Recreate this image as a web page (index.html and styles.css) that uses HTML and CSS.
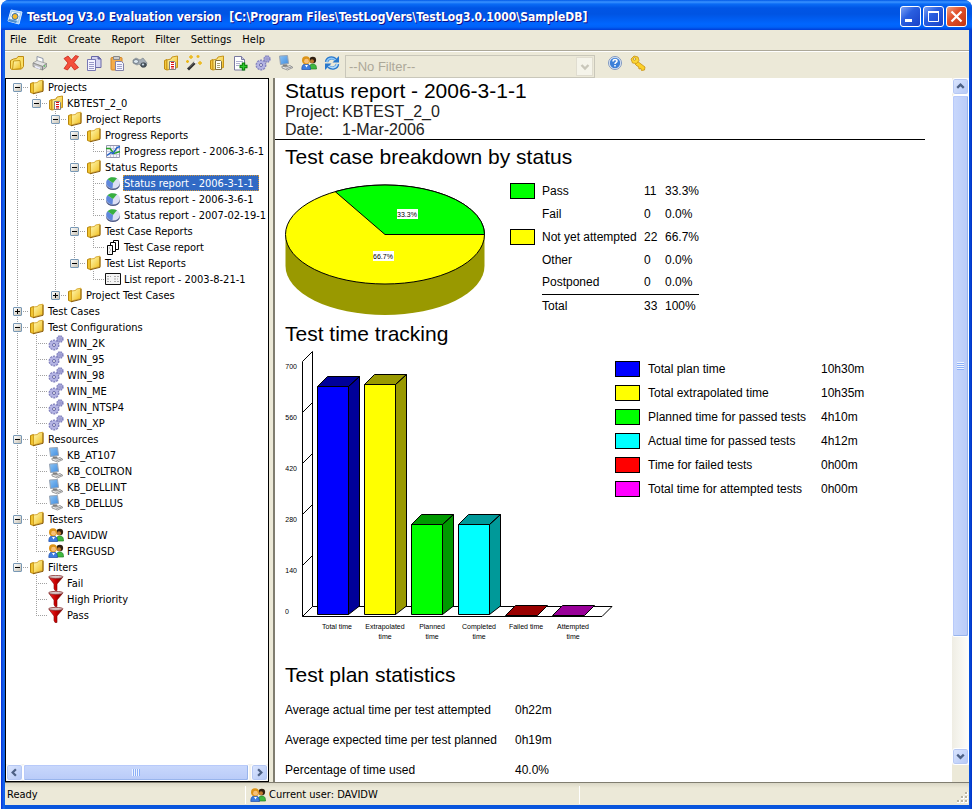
FILE: index.html
```html
<!DOCTYPE html>
<html lang="en">
  <head>
    <meta charset="UTF-8" />
    <meta name="viewport" content="width=device-width, initial-scale=1.0" />
    <title>TestLog V3.0 Evaluation version</title>
    <link rel="stylesheet" href="styles.css">
  </head>

  <body>
    <!-- Icon set, every icon is drawn on a 16x16 grid -->
    <svg class="sprite" aria-hidden="true">
      <defs>
        <linearGradient id="gold" x1="0" y1="0" x2="1" y2="1">
          <stop offset="0" stop-color="#fffbb8" />
          <stop offset="1" stop-color="#f0bb18" />
        </linearGradient>
        <linearGradient id="red" x1="0" x2="1">
          <stop offset="0" stop-color="#f03030" />
          <stop offset="0.5" stop-color="#c80000" />
          <stop offset="1" stop-color="#700000" />
        </linearGradient>
        <linearGradient id="screen" x1="0" y1="0" x2="1" y2="1">
          <stop offset="0" stop-color="#8cc4f4" />
          <stop offset="1" stop-color="#3f8ce0" />
        </linearGradient>
      </defs>
      <symbol id="i-app" viewBox="0 0 16 16">
        <path d="M4 1l11 2-3 12-11-3z" fill="#9fcdf4" stroke="#d8ecff" />
        <path d="M5 3l8 1.500-2 7-8-2z" fill="#fff" />
        <circle cx="8" cy="7.500" r="3" fill="#f4b92c" stroke="#2c6cb4" />
        <path d="M2 10l8 2-1 2-8-2z" fill="#4f8fd0" />
      </symbol>
      <symbol id="i-folder" viewBox="0 0 16 16">
        <path d="M1.500 4.500l3-1v11l-3-1z" fill="#f0c430" stroke="#b8860b" />
        <path d="M4.500 4l4-.500 1-1.500 4.500-.800v10.300l-9.500 2.500z" fill="url(#gold)" stroke="#d09c18" stroke-width=".8" />
        <path d="M4 14.800l10-2.500V2" fill="none" stroke="#8a5c08" />
      </symbol>
      <symbol id="i-open" viewBox="0 0 16 16">
        <path d="M1.500 5.500l3-1.500 3-.500 1.500-2h5.500v10l-2 2.500-9.500.500-1.500-1z" fill="#fbe066" stroke="#c08a10" />
        <path d="M4.500 6l6.500-.500 1 8-8.500 1z" fill="url(#gold)" stroke="#c89a18" />
      </symbol>
      <symbol id="i-printer" viewBox="0 0 16 16">
        <path d="M5 7V1.500l6 2V8" fill="#fff" stroke="#8e96a8" />
        <path d="M1 8l4-2.500 9.500 3-3.500 3z" fill="#e4e4e4" stroke="#909090" stroke-width=".7" />
        <path d="M1 8v3.500l9.500 3.500v-3.500zM10.500 11.500V15l4-3V8.500z" fill="#c4c4c4" stroke="#808080" stroke-width=".7" />
        <path d="M3 11.500l5 2" stroke="#eef" stroke-width="1.500" />
        <circle cx="12.500" cy="11" r=".8" fill="#4c4" />
      </symbol>
      <symbol id="i-delete" viewBox="0 0 16 16">
        <path d="M1 3.500l4-2.500 3.500 4 4-4.500 3 1-4.500 6 4.500 5-4 2.500-3.500-4.500-3.500 4.500-3.500-1.500 4-5.500z" fill="#f4503c" stroke="#c82418" stroke-width=".8" />
      </symbol>
      <symbol id="i-copy" viewBox="0 0 16 16">
        <path d="M5.500 1.500h7l2.500 2.500v8.500H5.500z" fill="#d4d4f0" stroke="#6868a8" />
        <path d="M12 1.500V4h3" fill="#6868a8" stroke="#6868a8" />
        <path d="M1.500 4.500h8v11h-8z" fill="#f4f4ff" stroke="#7878b4" />
        <path d="M3 7.500h5M3 9.500h5M3 11.500h5M3 13.500h5" stroke="#9a9ac8" />
      </symbol>
      <symbol id="i-paste" viewBox="0 0 16 16">
        <rect x="2" y="2.500" width="11" height="12.500" rx="1" fill="#f4ac48" stroke="#d08428" />
        <path d="M4.500 1.500h6v3h-6z" fill="#ccc" stroke="#888" />
        <path d="M6.500 6.500h6l2 2v7h-8z" fill="#f4f6ff" stroke="#8080a8" />
        <path d="M8 9.500h5M8 11.500h5M8 13.500h5" stroke="#a0a0c8" />
      </symbol>
      <symbol id="i-find" viewBox="0 0 16 16">
        <path d="M1 5l3-2 4 2 3-2 4 5-1 3-4 1-3-3-2 1-4-2z" fill="#a4adb6" stroke="#7c868e" stroke-width=".7" />
        <ellipse cx="4" cy="6.500" rx="2.500" ry="2" fill="#dce8f0" stroke="#66707a" stroke-width=".8" />
        <ellipse cx="11.500" cy="10" rx="2.800" ry="2.300" fill="#4a545c" stroke="#363e46" stroke-width=".6" />
        <ellipse cx="11" cy="9.500" rx="1.200" ry="1" fill="#c8d8e4" />
      </symbol>
      <symbol id="i-project" viewBox="0 0 16 16">
        <path d="M1.500 5.500l2.500-1v10.500l-2.500-1z" fill="#f4c83c" stroke="#c08c10" />
        <path d="M4 5l4-1 1-2 5.500-1v11.500l-10.500 2.500z" fill="url(#gold)" stroke="#c89418" />
        <path d="M6.500 6.500h5l1 1v7h-6z" fill="#fff" stroke="#808080" />
        <path d="M8 7.500h3M8 9.500h3M8 11.500h3M8 13h3" stroke="#e01010" />
      </symbol>
      <symbol id="i-wand" viewBox="0 0 16 16">
        <path d="M2 14.500l7.500-7.500" stroke="#303030" stroke-width="2.800" />
        <path d="M3 12.500l5.500-5.500" stroke="#909090" stroke-width=".8" />
        <path d="M8.500 8l2-2" stroke="#f4f4f4" stroke-width="2.800" />
        <path d="M5 0v4M3 2h4M12 0v3M10.500 1.500h3M14 6v4M12 8h4M1.500 5v3M0 6.500h3" stroke="#ecb818" stroke-width="1.400" />
      </symbol>
      <symbol id="i-case" viewBox="0 0 16 16">
        <path d="M1.500 5.500l2.500-1v10.500l-2.500-1z" fill="#f4c83c" stroke="#c08c10" />
        <path d="M4 5l4-1 1-2 5.500-1v11.500l-10.500 2.500z" fill="url(#gold)" stroke="#c89418" />
        <path d="M6.500 5.500h5l1 1v8h-6z" fill="#fffff4" stroke="#807040" />
        <path d="M8 8.500h3M8 10.500h3M8 12.500h3" stroke="#a8a070" />
      </symbol>
      <symbol id="i-add" viewBox="0 0 16 16">
        <path d="M2.500 1.500h7l3 3v10.500h-10z" fill="#fff" stroke="#7878a0" />
        <path d="M9.500 1.500v3h3" fill="#c8c8e0" stroke="#7878a0" />
        <path d="M4 6.500h7M4 8.500h4M4 10.500h3" stroke="#b0b0d0" />
        <path d="M11.500 7.500v8M7.500 11.500h8" stroke="#087808" stroke-width="3.400" />
        <path d="M11.500 8.500v6M8.500 11.500h6" stroke="#30c830" stroke-width="1.400" />
      </symbol>
      <symbol id="i-gears" viewBox="0 0 16 16">
        <circle cx="6" cy="10" r="4.500" fill="#b0b0e0" stroke="#8484c0" stroke-width="2" stroke-dasharray="2 .8" />
        <circle cx="6" cy="10" r="4" fill="#b4b4e4" />
        <circle cx="6" cy="10" r="1.500" fill="#f4f4f4" stroke="#6868a8" />
        <circle cx="12" cy="4" r="2.800" fill="#b8b8e8" stroke="#8484c0" stroke-width="1.800" stroke-dasharray="1.600 .6" />
        <circle cx="12" cy="4" r="1" fill="#f4f4ff" stroke="#6868a8" stroke-width=".7" />
      </symbol>
      <symbol id="i-computer" viewBox="0 0 16 16">
        <path d="M1.500 1l8-.500 1 8-8 1z" fill="url(#screen)" stroke="#98a4b4" />
        <path d="M5 9.500h4l1 2-5 .500z" fill="#808080" />
        <path d="M4 11l4 1 4-1.500 3 2-5.500 2.500-5.500-2z" fill="#e8e8e8" stroke="#888" stroke-width=".8" />
        <path d="M8.500 13.500l5-1.500" stroke="#707070" stroke-width=".7" />
      </symbol>
      <symbol id="i-users" viewBox="0 0 16 16">
        <path d="M8.500 14c0-5 1.500-5 3.500-5s3.500 1 3.500 5z" fill="#40b840" stroke="#208020" stroke-width=".7" />
        <circle cx="11.800" cy="5" r="3.300" fill="#302010" />
        <circle cx="11" cy="6.300" r="2" fill="#c07830" />
        <path d="M.8 14.500c0-4.500 1.700-5.500 4.200-5.500s4.500 1 4.500 5.500z" fill="#3c7ce0" stroke="#1c4cac" stroke-width=".7" />
        <circle cx="5" cy="5.300" r="4" fill="#dc9418" />
        <circle cx="5.500" cy="6.200" r="2.400" fill="#f8c078" />
        <path d="M4 10l1.500 2.500 1.500-2.500z" fill="#fff" />
      </symbol>
      <symbol id="i-refresh" viewBox="0 0 16 16">
        <path d="M2.500 7C3 3 8 1.500 11.500 4.500" fill="none" stroke="#2878cc" stroke-width="3.400" />
        <path d="M15 1v6.500H8.500z" fill="#2878cc" />
        <path d="M2.800 7C3.500 3.500 8 2 11.500 5" fill="none" stroke="#8cc8f8" stroke-width="1.600" />
        <path d="M13.500 9C13 13 8 14.500 4.500 11.500" fill="none" stroke="#2878cc" stroke-width="3.400" />
        <path d="M1 15V8.500h6.500z" fill="#2878cc" />
        <path d="M13.200 9C12.500 12.500 8 14 4.500 11" fill="none" stroke="#b4dcfc" stroke-width="1.600" />
      </symbol>
      <symbol id="i-help" viewBox="0 0 16 16">
        <circle cx="8" cy="8" r="6.500" fill="#e4ecf8" stroke="#8098c0" />
        <circle cx="8" cy="8" r="5.200" fill="#3c80d8" />
        <path d="M6 6.500c0-3 4.200-2.500 4-.3-.2 1.300-2 1.300-2 2.800M8 10v1.600" fill="none" stroke="#fff" stroke-width="1.500" />
      </symbol>
      <symbol id="i-key" viewBox="0 0 16 16">
        <path d="M7 6l8 6-.500 3-3 .500-.500-2-2 .500-.500-2.500-1.500-.500-2-2" fill="#fcd028" stroke="#c89010" stroke-width=".8" />
        <path d="M1 4l3-3 4 1 1 3.500-2.500 3-4-.500z" fill="#fcd838" stroke="#c89010" stroke-width=".8" />
        <circle cx="4.500" cy="4" r="1.300" fill="#ece9d8" stroke="#b88408" stroke-width=".7" />
      </symbol>
      <symbol id="i-chart" viewBox="0 0 16 16">
        <path d="M1.500 2.500h13v12h-13z" fill="#f4f4fc" stroke="#9898b0" />
        <path d="M2 5.500h12M2 8.500h12M2 11.500h12M5.500 3v11M8.500 3v11M11.500 3v11" stroke="#c8c8dc" />
        <path d="M1 5.500h4l4 5 6-2" fill="none" stroke="#28a028" stroke-width="1.400" />
        <path d="M2 12.500l4-3 2 1 4-6 3-1" fill="none" stroke="#2060c8" stroke-width="1.400" />
      </symbol>
      <symbol id="i-pie" viewBox="0 0 16 16">
        <ellipse cx="8" cy="9.500" rx="7" ry="5.500" fill="#505c88" />
        <ellipse cx="8" cy="7.800" rx="7" ry="5.800" fill="#dce0f4" />
        <path d="M8 8L2.500 4.300C0 7 1 12.500 7.500 13.600z" fill="#6088dc" />
        <path d="M8 8L2.500 4.300C5 1.500 9 1.800 12 3.300z" fill="#38b040" />
      </symbol>
      <symbol id="i-pages" viewBox="0 0 16 16">
        <path d="M8.500 1.500h5v9h-5z" fill="#fff" stroke="#000" />
        <path d="M5.500 3.500h5v9h-5z" fill="#fff" stroke="#000" />
        <path d="M2.500 6.500h5v9h-5z" fill="#f4f4f4" stroke="#000" />
        <path d="M4 9h1M5 11h1M4 13h1" stroke="#999" />
      </symbol>
      <symbol id="i-list" viewBox="0 0 16 16">
        <path d="M.5 2.500h15v11H.5z" fill="#f4f4f4" stroke="#111" />
        <path d="M2 5.500h4M9 5.500h5M2 8h3M9 8h4M2 10.500h4M9 10.500h5" stroke="#aaa" stroke-dasharray="2 1" />
      </symbol>
      <symbol id="i-funnel" viewBox="0 0 16 16">
        <path d="M1 2.500L6 9v4.500l1 2h2V9l5.500-6.500z" fill="url(#red)" stroke="#800000" stroke-width=".6" />
        <ellipse cx="7.800" cy="1.900" rx="7.300" ry="1.500" fill="#d8c8c8" stroke="#883030" stroke-width=".8" />
      </symbol>
      <symbol id="i-up" viewBox="0 0 16 16"><path d="M4.500 9.500L8 6l3.500 3.500" fill="none" stroke="#4d6185" stroke-width="2.400" /></symbol>
      <symbol id="i-down" viewBox="0 0 16 16"><path d="M4.500 6L8 9.500 11.500 6" fill="none" stroke="currentColor" stroke-width="2.400" /></symbol>
      <symbol id="i-left" viewBox="0 0 16 16"><path d="M9.500 4.500L6 8l3.500 3.500" fill="none" stroke="#4d6185" stroke-width="2.400" /></symbol>
      <symbol id="i-right" viewBox="0 0 16 16"><path d="M6.500 4.500L10 8l-3.500 3.500" fill="none" stroke="#4d6185" stroke-width="2.400" /></symbol>
    </svg>

    <div class="window">
      <!-- Title bar -->
      <header class="titlebar">
        <svg class="icon"><use href="#i-app" /></svg>
        <h1 class="caption">TestLog V3.0 Evaluation version&nbsp; [C:\Program Files\TestLogVers\TestLog3.0.1000\SampleDB]</h1>
        <button class="winbtn" aria-label="Minimize"><svg viewBox="0 0 19 19"><path d="M4 13.500h7" stroke="#fff" stroke-width="3" /></svg></button>
        <button class="winbtn" aria-label="Maximize"><svg viewBox="0 0 19 19"><path d="M4.500 5.500h10v9h-10z" fill="none" stroke="#fff" /><path d="M4 5h11" stroke="#fff" stroke-width="2" /></svg></button>
        <button class="winbtn close" aria-label="Close"><svg viewBox="0 0 19 19"><path d="M4.500 4.500l10 10M14.500 4.500l-10 10" stroke="#fff" stroke-width="2.200" /></svg></button>
      </header>

      <!-- Menu -->
      <nav class="menu">
        <button>File</button>
        <button>Edit</button>
        <button>Create</button>
        <button>Report</button>
        <button>Filter</button>
        <button>Settings</button>
        <button>Help</button>
      </nav>

      <!-- Toolbar -->
      <div class="toolbar">
        <button aria-label="Open"><svg class="icon"><use href="#i-open" /></svg></button>
        <button aria-label="Print"><svg class="icon"><use href="#i-printer" /></svg></button>
        <button class="group" aria-label="Delete"><svg class="icon"><use href="#i-delete" /></svg></button>
        <button aria-label="Copy"><svg class="icon"><use href="#i-copy" /></svg></button>
        <button aria-label="Paste"><svg class="icon"><use href="#i-paste" /></svg></button>
        <button aria-label="Find"><svg class="icon"><use href="#i-find" /></svg></button>
        <button class="group" aria-label="New project"><svg class="icon"><use href="#i-project" /></svg></button>
        <button aria-label="Wizard"><svg class="icon"><use href="#i-wand" /></svg></button>
        <button aria-label="New test case"><svg class="icon"><use href="#i-case" /></svg></button>
        <button aria-label="Add document"><svg class="icon"><use href="#i-add" /></svg></button>
        <button aria-label="Configurations"><svg class="icon"><use href="#i-gears" /></svg></button>
        <button aria-label="Resources"><svg class="icon"><use href="#i-computer" /></svg></button>
        <button aria-label="Testers"><svg class="icon"><use href="#i-users" /></svg></button>
        <button aria-label="Refresh"><svg class="icon"><use href="#i-refresh" /></svg></button>
        <div class="filter">
          <select aria-label="Filter" disabled>
            <option>--No Filter--</option>
          </select>
          <span class="drop"><svg class="icon"><use href="#i-down" /></svg></span>
        </div>
        <button aria-label="Help"><svg class="icon"><use href="#i-help" /></svg></button>
        <button aria-label="License key"><svg class="icon"><use href="#i-key" /></svg></button>
      </div>

      <div class="content">
        <!-- Project tree -->
        <aside class="sidebar">
          <ul class="tree">
            <li>
              <div class="row"><span class="lead"><button class="toggle" aria-label="Collapse"></button></span><svg class="icon"><use href="#i-folder" /></svg><span class="label">Projects</span></div>
              <ul>
                <li>
                  <div class="row"><span class="lead"><button class="toggle" aria-label="Collapse"></button></span><svg class="icon"><use href="#i-project" /></svg><span class="label">KBTEST_2_0</span></div>
                  <ul>
                    <li>
                      <div class="row"><span class="lead"><button class="toggle" aria-label="Collapse"></button></span><svg class="icon"><use href="#i-folder" /></svg><span class="label">Project Reports</span></div>
                      <ul>
                        <li>
                          <div class="row"><span class="lead"><button class="toggle" aria-label="Collapse"></button></span><svg class="icon"><use href="#i-folder" /></svg><span class="label">Progress Reports</span></div>
                          <ul>
                            <li><div class="row"><span class="lead"></span><svg class="icon"><use href="#i-chart" /></svg><span class="label">Progress report - 2006-3-6-1</span></div></li>
                          </ul>
                        </li>
                        <li>
                          <div class="row"><span class="lead"><button class="toggle" aria-label="Collapse"></button></span><svg class="icon"><use href="#i-folder" /></svg><span class="label">Status Reports</span></div>
                          <ul>
                            <li><div class="row"><span class="lead"></span><svg class="icon"><use href="#i-pie" /></svg><span class="label selected">Status report - 2006-3-1-1</span></div></li>
                            <li><div class="row"><span class="lead"></span><svg class="icon"><use href="#i-pie" /></svg><span class="label">Status report - 2006-3-6-1</span></div></li>
                            <li><div class="row"><span class="lead"></span><svg class="icon"><use href="#i-pie" /></svg><span class="label">Status report - 2007-02-19-1</span></div></li>
                          </ul>
                        </li>
                        <li>
                          <div class="row"><span class="lead"><button class="toggle" aria-label="Collapse"></button></span><svg class="icon"><use href="#i-folder" /></svg><span class="label">Test Case Reports</span></div>
                          <ul>
                            <li><div class="row"><span class="lead"></span><svg class="icon"><use href="#i-pages" /></svg><span class="label">Test Case report</span></div></li>
                          </ul>
                        </li>
                        <li>
                          <div class="row"><span class="lead"><button class="toggle" aria-label="Collapse"></button></span><svg class="icon"><use href="#i-folder" /></svg><span class="label">Test List Reports</span></div>
                          <ul>
                            <li><div class="row"><span class="lead"></span><svg class="icon"><use href="#i-list" /></svg><span class="label">List report - 2003-8-21-1</span></div></li>
                          </ul>
                        </li>
                      </ul>
                    </li>
                    <li>
                      <div class="row"><span class="lead"><button class="toggle plus" aria-label="Expand"></button></span><svg class="icon"><use href="#i-folder" /></svg><span class="label">Project Test Cases</span></div>
                    </li>
                  </ul>
                </li>
              </ul>
            </li>
            <li>
              <div class="row"><span class="lead"><button class="toggle plus" aria-label="Expand"></button></span><svg class="icon"><use href="#i-folder" /></svg><span class="label">Test Cases</span></div>
            </li>
            <li>
              <div class="row"><span class="lead"><button class="toggle" aria-label="Collapse"></button></span><svg class="icon"><use href="#i-folder" /></svg><span class="label">Test Configurations</span></div>
              <ul>
                <li><div class="row"><span class="lead"></span><svg class="icon"><use href="#i-gears" /></svg><span class="label">WIN_2K</span></div></li>
                <li><div class="row"><span class="lead"></span><svg class="icon"><use href="#i-gears" /></svg><span class="label">WIN_95</span></div></li>
                <li><div class="row"><span class="lead"></span><svg class="icon"><use href="#i-gears" /></svg><span class="label">WIN_98</span></div></li>
                <li><div class="row"><span class="lead"></span><svg class="icon"><use href="#i-gears" /></svg><span class="label">WIN_ME</span></div></li>
                <li><div class="row"><span class="lead"></span><svg class="icon"><use href="#i-gears" /></svg><span class="label">WIN_NTSP4</span></div></li>
                <li><div class="row"><span class="lead"></span><svg class="icon"><use href="#i-gears" /></svg><span class="label">WIN_XP</span></div></li>
              </ul>
            </li>
            <li>
              <div class="row"><span class="lead"><button class="toggle" aria-label="Collapse"></button></span><svg class="icon"><use href="#i-folder" /></svg><span class="label">Resources</span></div>
              <ul>
                <li><div class="row"><span class="lead"></span><svg class="icon"><use href="#i-computer" /></svg><span class="label">KB_AT107</span></div></li>
                <li><div class="row"><span class="lead"></span><svg class="icon"><use href="#i-computer" /></svg><span class="label">KB_COLTRON</span></div></li>
                <li><div class="row"><span class="lead"></span><svg class="icon"><use href="#i-computer" /></svg><span class="label">KB_DELLINT</span></div></li>
                <li><div class="row"><span class="lead"></span><svg class="icon"><use href="#i-computer" /></svg><span class="label">KB_DELLUS</span></div></li>
              </ul>
            </li>
            <li>
              <div class="row"><span class="lead"><button class="toggle" aria-label="Collapse"></button></span><svg class="icon"><use href="#i-folder" /></svg><span class="label">Testers</span></div>
              <ul>
                <li><div class="row"><span class="lead"></span><svg class="icon"><use href="#i-users" /></svg><span class="label">DAVIDW</span></div></li>
                <li><div class="row"><span class="lead"></span><svg class="icon"><use href="#i-users" /></svg><span class="label">FERGUSD</span></div></li>
              </ul>
            </li>
            <li>
              <div class="row"><span class="lead"><button class="toggle" aria-label="Collapse"></button></span><svg class="icon"><use href="#i-folder" /></svg><span class="label">Filters</span></div>
              <ul>
                <li><div class="row"><span class="lead"></span><svg class="icon"><use href="#i-funnel" /></svg><span class="label">Fail</span></div></li>
                <li><div class="row"><span class="lead"></span><svg class="icon"><use href="#i-funnel" /></svg><span class="label">High Priority</span></div></li>
                <li><div class="row"><span class="lead"></span><svg class="icon"><use href="#i-funnel" /></svg><span class="label">Pass</span></div></li>
              </ul>
            </li>
          </ul>
          <div class="scroll-h">
            <button class="scrollbtn" aria-label="Scroll left"><svg class="icon"><use href="#i-left" /></svg></button>
            <div class="thumb"><span class="grip"></span></div>
            <button class="scrollbtn" aria-label="Scroll right"><svg class="icon"><use href="#i-right" /></svg></button>
          </div>
        </aside>

        <!-- Report -->
        <main class="report">
          <div class="report-head">
            <h2>Status report - 2006-3-1-1</h2>
            <dl>
              <dt>Project:</dt>
              <dd>KBTEST_2_0</dd>
              <dt>Date:</dt>
              <dd>1-Mar-2006</dd>
            </dl>
          </div>

          <section class="breakdown">
            <h2>Test case breakdown by status</h2>
            <div class="chart-row">
              <svg class="pie" viewBox="285 183 201 131" role="img" aria-label="Test cases by status">
                <path d="M285.500 234v31a99.500 49 0 0 0 199 0v-31z" fill="#999900" />
                <ellipse cx="385" cy="233.500" rx="99.500" ry="49.500" fill="#ffff00" stroke="#000" />
                <path d="M385 233.500h99.500A99.500 49.500 0 0 0 335.250 190.630z" fill="#00ff00" stroke="#000" />
                <path d="M397 208h21v10h-21zM373 250h21v10h-21z" fill="#fff" />
                <text x="407" y="216" class="tiny">33.3%</text>
                <text x="383" y="258" class="tiny">66.7%</text>
              </svg>
              <table class="status">
                <tr>
                  <td><span class="swatch pass"></span></td>
                  <td>Pass</td>
                  <td>11</td>
                  <td>33.3%</td>
                </tr>
                <tr>
                  <td></td>
                  <td>Fail</td>
                  <td>0</td>
                  <td>0.0%</td>
                </tr>
                <tr>
                  <td><span class="swatch untested"></span></td>
                  <td>Not yet attempted</td>
                  <td>22</td>
                  <td>66.7%</td>
                </tr>
                <tr>
                  <td></td>
                  <td>Other</td>
                  <td>0</td>
                  <td>0.0%</td>
                </tr>
                <tr>
                  <td></td>
                  <td>Postponed</td>
                  <td>0</td>
                  <td>0.0%</td>
                </tr>
                <tr class="total">
                  <td></td>
                  <td>Total</td>
                  <td>33</td>
                  <td>100%</td>
                </tr>
              </table>
            </div>
          </section>

          <section class="tracking">
            <h2>Test time tracking</h2>
            <div class="chart-row">
              <svg class="bars" viewBox="285 352 330 292" role="img" aria-label="Test time in minutes">
                <!-- Axes -->
                <g fill="none" stroke="#000">
                  <path d="M302.500 618.500V363.500l10-10V608.500H612M302.500 618.500H602l10-10M302.500 618.500l10-10" />
                  <path d="M302.500 414.500l10-10M302.500 465.500l10-10M302.500 516.500l10-10M302.500 567.500l10-10" />
                </g>
                <!-- Bars: front, top and side faces -->
                <g stroke="#000">
                  <path d="M317.500 388.500h31v228h-31z" fill="#0000ff" />
                  <path d="M317.500 388.500l10-10h32l-11 10zM348.500 388.500l11-10v229.500l-11 8.500z" fill="#000099" />
                  <path d="M364.500 386.500h31v230h-31z" fill="#ffff00" />
                  <path d="M364.500 386.500l10-10h32l-11 10zM395.500 386.500l11-10v231.500l-11 8.500z" fill="#999900" />
                  <path d="M411.500 526.500h31v90h-31z" fill="#00ff00" />
                  <path d="M411.500 526.500l10-10h32l-11 10zM442.500 526.500l11-10v91.500l-11 8.500z" fill="#009900" />
                  <path d="M458.500 526.500h31v90h-31z" fill="#00ffff" />
                  <path d="M458.500 526.500l10-10h32l-11 10zM489.500 526.500l11-10v91.500l-11 8.500z" fill="#009999" />
                  <path d="M505.500 617.500l10-10h32l-10 10z" fill="#990000" />
                  <path d="M552.500 617.500l10-10h32l-10 10z" fill="#990099" />
                </g>
                <g class="tiny axis">
                  <text x="297" y="371">700</text>
                  <text x="297" y="422">560</text>
                  <text x="297" y="473">420</text>
                  <text x="297" y="524">280</text>
                  <text x="297" y="575">140</text>
                  <text x="289" y="616">0</text>
                </g>
                <g class="tiny">
                  <text x="337" y="631">Total time</text>
                  <text x="385" y="631">Extrapolated</text>
                  <text x="385" y="641">time</text>
                  <text x="432" y="631">Planned</text>
                  <text x="432" y="641">time</text>
                  <text x="479" y="631">Completed</text>
                  <text x="479" y="641">time</text>
                  <text x="526" y="631">Failed time</text>
                  <text x="573" y="631">Attempted</text>
                  <text x="573" y="641">time</text>
                </g>
              </svg>
              <table class="times">
                <tr>
                  <td><span class="swatch plan"></span></td>
                  <td>Total plan time</td>
                  <td>10h30m</td>
                </tr>
                <tr>
                  <td><span class="swatch extrapolated"></span></td>
                  <td>Total extrapolated time</td>
                  <td>10h35m</td>
                </tr>
                <tr>
                  <td><span class="swatch pass"></span></td>
                  <td>Planned time for passed tests</td>
                  <td>4h10m</td>
                </tr>
                <tr>
                  <td><span class="swatch actual"></span></td>
                  <td>Actual time for passed tests</td>
                  <td>4h12m</td>
                </tr>
                <tr>
                  <td><span class="swatch failed"></span></td>
                  <td>Time for failed tests</td>
                  <td>0h00m</td>
                </tr>
                <tr>
                  <td><span class="swatch attempted"></span></td>
                  <td>Total time for attempted tests</td>
                  <td>0h00m</td>
                </tr>
              </table>
            </div>
          </section>

          <section class="statistics">
            <h2>Test plan statistics</h2>
            <table class="stats">
              <tr>
                <td>Average actual time per test attempted</td>
                <td>0h22m</td>
              </tr>
              <tr>
                <td>Average expected time per test planned</td>
                <td>0h19m</td>
              </tr>
              <tr>
                <td>Percentage of time used</td>
                <td>40.0%</td>
              </tr>
            </table>
          </section>
        </main>

        <div class="scroll-v">
          <button class="scrollbtn" aria-label="Scroll up"><svg class="icon"><use href="#i-up" /></svg></button>
          <div class="track">
            <div class="thumb"><span class="grip"></span></div>
          </div>
          <button class="scrollbtn" aria-label="Scroll down"><svg class="icon"><use href="#i-down" /></svg></button>
        </div>
      </div>

      <!-- Status bar -->
      <footer class="statusbar">
        <span class="ready">Ready</span>
        <span class="user"><svg class="icon"><use href="#i-users" /></svg>Current user: DAVIDW</span>
        <svg class="sizegrip" viewBox="0 0 14 14"><path d="M10 1h3v3h-3zM10 5h3v3h-3zM6 5h3v3H6zM10 9h3v3h-3zM6 9h3v3H6zM2 9h3v3H2z" fill="#fff" /><path d="M10 1h2v2h-2zM10 5h2v2h-2zM6 5h2v2H6zM10 9h2v2h-2zM6 9h2v2H6zM2 9h2v2H2z" fill="#b8b4a2" /></svg>
      </footer>
    </div>
  </body>
</html>
```

FILE: styles.css
```css
* {
  margin: 0;
  padding: 0;
  box-sizing: border-box;
}

body {
  height: 100vh;
  overflow: hidden;
  background-color: white;
  color: black;
  font-family: "DejaVu Sans Condensed", "DejaVu Sans", sans-serif;
  font-size: 11px;
}

button {
  border: none;
  background: none;
  color: inherit;
  font: inherit;
}

ul {
  list-style: none;
}

.sprite {
  position: absolute;
  width: 0;
  height: 0;
}

.icon {
  flex: none;
  width: 16px;
  height: 16px;
}

/* Window frame */
.window {
  display: flex;
  flex-direction: column;
  height: 100vh;
  margin: 0 1px;
  padding: 0 3px 4px 4px;
  background: linear-gradient(to right, #0831d9, #166aee 3px, #0855dd 4px, #0855dd calc(100% - 3px), #0030c8);
  border-radius: 8px 8px 0 0;
  overflow: hidden;
}

.titlebar {
  flex: none;
  display: flex;
  align-items: center;
  gap: 2px;
  height: 30px;
  margin: 0 -3px 0 -4px;
  padding: 3px 5px 0 6px;
  background: linear-gradient(#0058e6 0, #3a93ff 2px, #0a6bf5 4px, #0055e5 8px, #0054e3 14px, #0066ff 24px, #0062f8 27px, #003dd7 30px);
}

.caption {
  flex: 1;
  padding-left: 2px;
  overflow: hidden;
  color: white;
  font-size: 12px;
  font-weight: bold;
  line-height: 20px;
  white-space: nowrap;
  text-shadow: 1px 1px #0f1089;
}

.winbtn {
  flex: none;
  width: 21px;
  height: 21px;
  border: 1px solid white;
  border-radius: 3px;
  background: linear-gradient(135deg, #7da2f4, #2a5fe0 40%, #1941c8);
}

.winbtn svg {
  display: block;
  width: 19px;
  height: 19px;
}

.close {
  background: linear-gradient(135deg, #f0a080, #e2512c 40%, #c43410);
}

/* Menu and toolbar */
.menu {
  flex: none;
  display: flex;
  gap: 11px;
  height: 22px;
  padding: 0 5px;
  background-color: #ece9d8;
  border-bottom: 1px solid white;
  box-shadow: inset 0 -1px #aca899;
}

.menu button {
  height: 20px;
  line-height: 20px;
}

.toolbar {
  flex: none;
  display: flex;
  height: 26px;
  background-color: #ece9d8;
}

.toolbar > button {
  display: flex;
  justify-content: center;
  align-items: center;
  width: 23px;
  height: 22px;
}

.toolbar .group {
  margin-left: 8px;
}

.filter {
  display: grid;
  width: 250px;
  height: 23px;
  margin: 3px 8px 0 2px;
  border: 1px solid #c9c7ba;
}

.filter select,
.drop {
  grid-area: 1 / 1;
}

.filter select {
  appearance: none;
  padding: 0 3px;
  border: none;
  border-radius: 0;
  background-color: #ece9d8;
  color: #aca899;
  font-family: "Liberation Sans", sans-serif;
  font-size: 13px;
  opacity: 1;
}

.drop {
  justify-self: end;
  display: flex;
  align-items: center;
  width: 17px;
  margin: 1px;
  border: 1px solid #e0ddd0;
  background-color: #f5f4ea;
  color: #c9c7ba;
}

/* Main area */
.content {
  flex: 1;
  display: flex;
  min-height: 0;
  background-color: #ece9d8;
}

.sidebar {
  flex: none;
  display: flex;
  flex-direction: column;
  width: 264px;
  border: 1px solid black;
  background-color: white;
}

.tree {
  flex: 1;
  min-height: 0;
  padding-left: 7px;
  overflow: hidden;
}

.tree ul {
  padding-left: 19px;
}

.tree li {
  background: repeating-linear-gradient(#a0a0a0 0 1px, transparent 1px 2px) 4px 0 / 1px 100% no-repeat;
}

.tree li:last-child {
  background-size: 1px 8px;
}

.tree > li:first-child {
  background-position: 4px 8px;
}

.row {
  display: flex;
  align-items: center;
  height: 16px;
  white-space: nowrap;
}

.lead {
  display: flex;
  align-items: center;
  width: 16px;
  height: 16px;
  background: repeating-linear-gradient(to right, #a0a0a0 0 1px, transparent 1px 2px) 4px 8px / 12px 1px no-repeat;
}

.toggle {
  width: 9px;
  height: 9px;
  border: 1px solid #7898b5;
  border-radius: 1px;
  background: linear-gradient(black, black) center / 5px 1px no-repeat,
    linear-gradient(135deg, white, #c8c2b4);
}

.plus {
  background: linear-gradient(black, black) center / 5px 1px no-repeat,
    linear-gradient(black, black) center / 1px 5px no-repeat,
    linear-gradient(135deg, white, #c8c2b4);
}

.label {
  height: 16px;
  margin-left: 2px;
  padding: 0 1px;
  line-height: 18px;
}

.selected {
  padding-right: 5px;
  background-color: #316ac5;
  color: white;
  outline: 1px dotted #ce953a;
  outline-offset: -1px;
}

/* Scrollbars */
.scroll-h {
  flex: none;
  display: flex;
  height: 17px;
  background-color: #f4f3ee;
}

.scroll-v {
  flex: none;
  display: flex;
  flex-direction: column;
  width: 17px;
  padding-bottom: 17px;
  background: linear-gradient(to right, #efede4, #fefefb) top / 100% calc(100% - 17px) no-repeat;
}

.scrollbtn {
  flex: none;
  display: flex;
  width: 17px;
  height: 17px;
  border: 1px solid white;
  border-radius: 3px;
  background: linear-gradient(135deg, #dce6fe, #b4c8f6);
  box-shadow: inset 0 0 0 1px #b6c8f4;
  color: #4d6185;
}

.scrollbtn .icon {
  width: 15px;
  height: 15px;
}

.thumb {
  display: flex;
  justify-content: center;
  align-items: center;
  border: 1px solid white;
  border-radius: 2px;
  box-shadow: inset -1px -1px #98b4ec, inset 1px 1px #b8cafa;
}

.scroll-h .thumb {
  flex: 1;
  margin-right: 2px;
  background: linear-gradient(#c9d8fc, #b9cbf8);
}

.scroll-h .grip {
  width: 8px;
  height: 7px;
  background: repeating-linear-gradient(to right, #eef4fe 0 1px, #8cb0f8 1px 2px);
}

.track {
  flex: 1;
}

.scroll-v .thumb {
  height: 83%;
  background: linear-gradient(to right, #c9d8fc, #b9cbf8);
}

.scroll-v .grip {
  width: 7px;
  height: 8px;
  background: repeating-linear-gradient(#eef4fe 0 1px, #8cb0f8 1px 2px);
}

/* Report */
.report {
  flex: 1;
  min-width: 0;
  margin-left: 4px;
  overflow: hidden;
  background-color: white;
  border-left: 2px solid #807d70;
  font-family: "Liberation Sans", sans-serif;
  font-size: 12px;
}

.report h2 {
  font-size: 21px;
  font-weight: normal;
  line-height: 25px;
}

.report-head {
  margin-right: 27px;
  padding-left: 10px;
  border-bottom: 1px solid black;
}

.report-head dl {
  display: grid;
  grid-template-columns: 57px 1fr;
  font-size: 16px;
  line-height: 18px;
  color: #222;
}

section {
  padding-left: 10px;
}

.breakdown,
.tracking {
  padding-top: 4px;
}

.chart-row {
  display: flex;
}

.breakdown .chart-row {
  gap: 24px;
  padding-top: 10px;
}

.pie {
  flex: none;
  width: 201px;
  height: 131px;
  margin-top: 5px;
}

.tracking .chart-row {
  padding-top: 4px;
}

.bars {
  flex: none;
  width: 330px;
  height: 292px;
}

.tiny {
  font-size: 7px;
  text-anchor: middle;
}

.axis {
  text-anchor: end;
}

table {
  border-collapse: collapse;
}

td {
  white-space: nowrap;
}

.swatch {
  display: block;
  width: 25px;
  height: 16px;
  border: 1px solid black;
}

.pass { background-color: #00ff00; }
.untested, .extrapolated { background-color: #ffff00; }
.plan { background-color: #0000ff; }
.actual { background-color: #00ffff; }
.failed { background-color: #ff0000; }
.attempted { background-color: #ff00ff; }

.status {
  height: 138px;
}

.status tr {
  height: 23px;
}

.status td:nth-child(1) { width: 32px; }
.status td:nth-child(2) { width: 102px; }
.status td:nth-child(3) { width: 21px; }

.total td:not(:first-child) {
  border-top: 1px solid black;
}

.times {
  height: 144px;
  margin-top: 7px;
}

.times tr {
  height: 24px;
}

.times td:nth-child(1) { width: 33px; }
.times td:nth-child(2) { width: 173px; }

.statistics {
  padding-top: 20px;
}

.stats {
  margin-top: 8px;
}

.stats tr {
  height: 30px;
}

.stats td:first-child {
  width: 230px;
}

/* Status bar */
.statusbar {
  flex: none;
  display: flex;
  align-items: center;
  height: 23px;
  padding-top: 1px;
  border-top: 1px solid #807d70;
  background: linear-gradient(#dad7c6, #ece9d8 5px);
}

.statusbar .ready {
  width: 240px;
  padding-left: 2px;
}

.statusbar .user {
  display: flex;
  align-items: center;
  gap: 3px;
  width: 335px;
  height: 18px;
  padding-left: 4px;
  border-left: 1px solid white;
  border-right: 1px solid white;
}

.sizegrip {
  align-self: flex-end;
  width: 14px;
  height: 14px;
  margin-left: auto;
}
```
